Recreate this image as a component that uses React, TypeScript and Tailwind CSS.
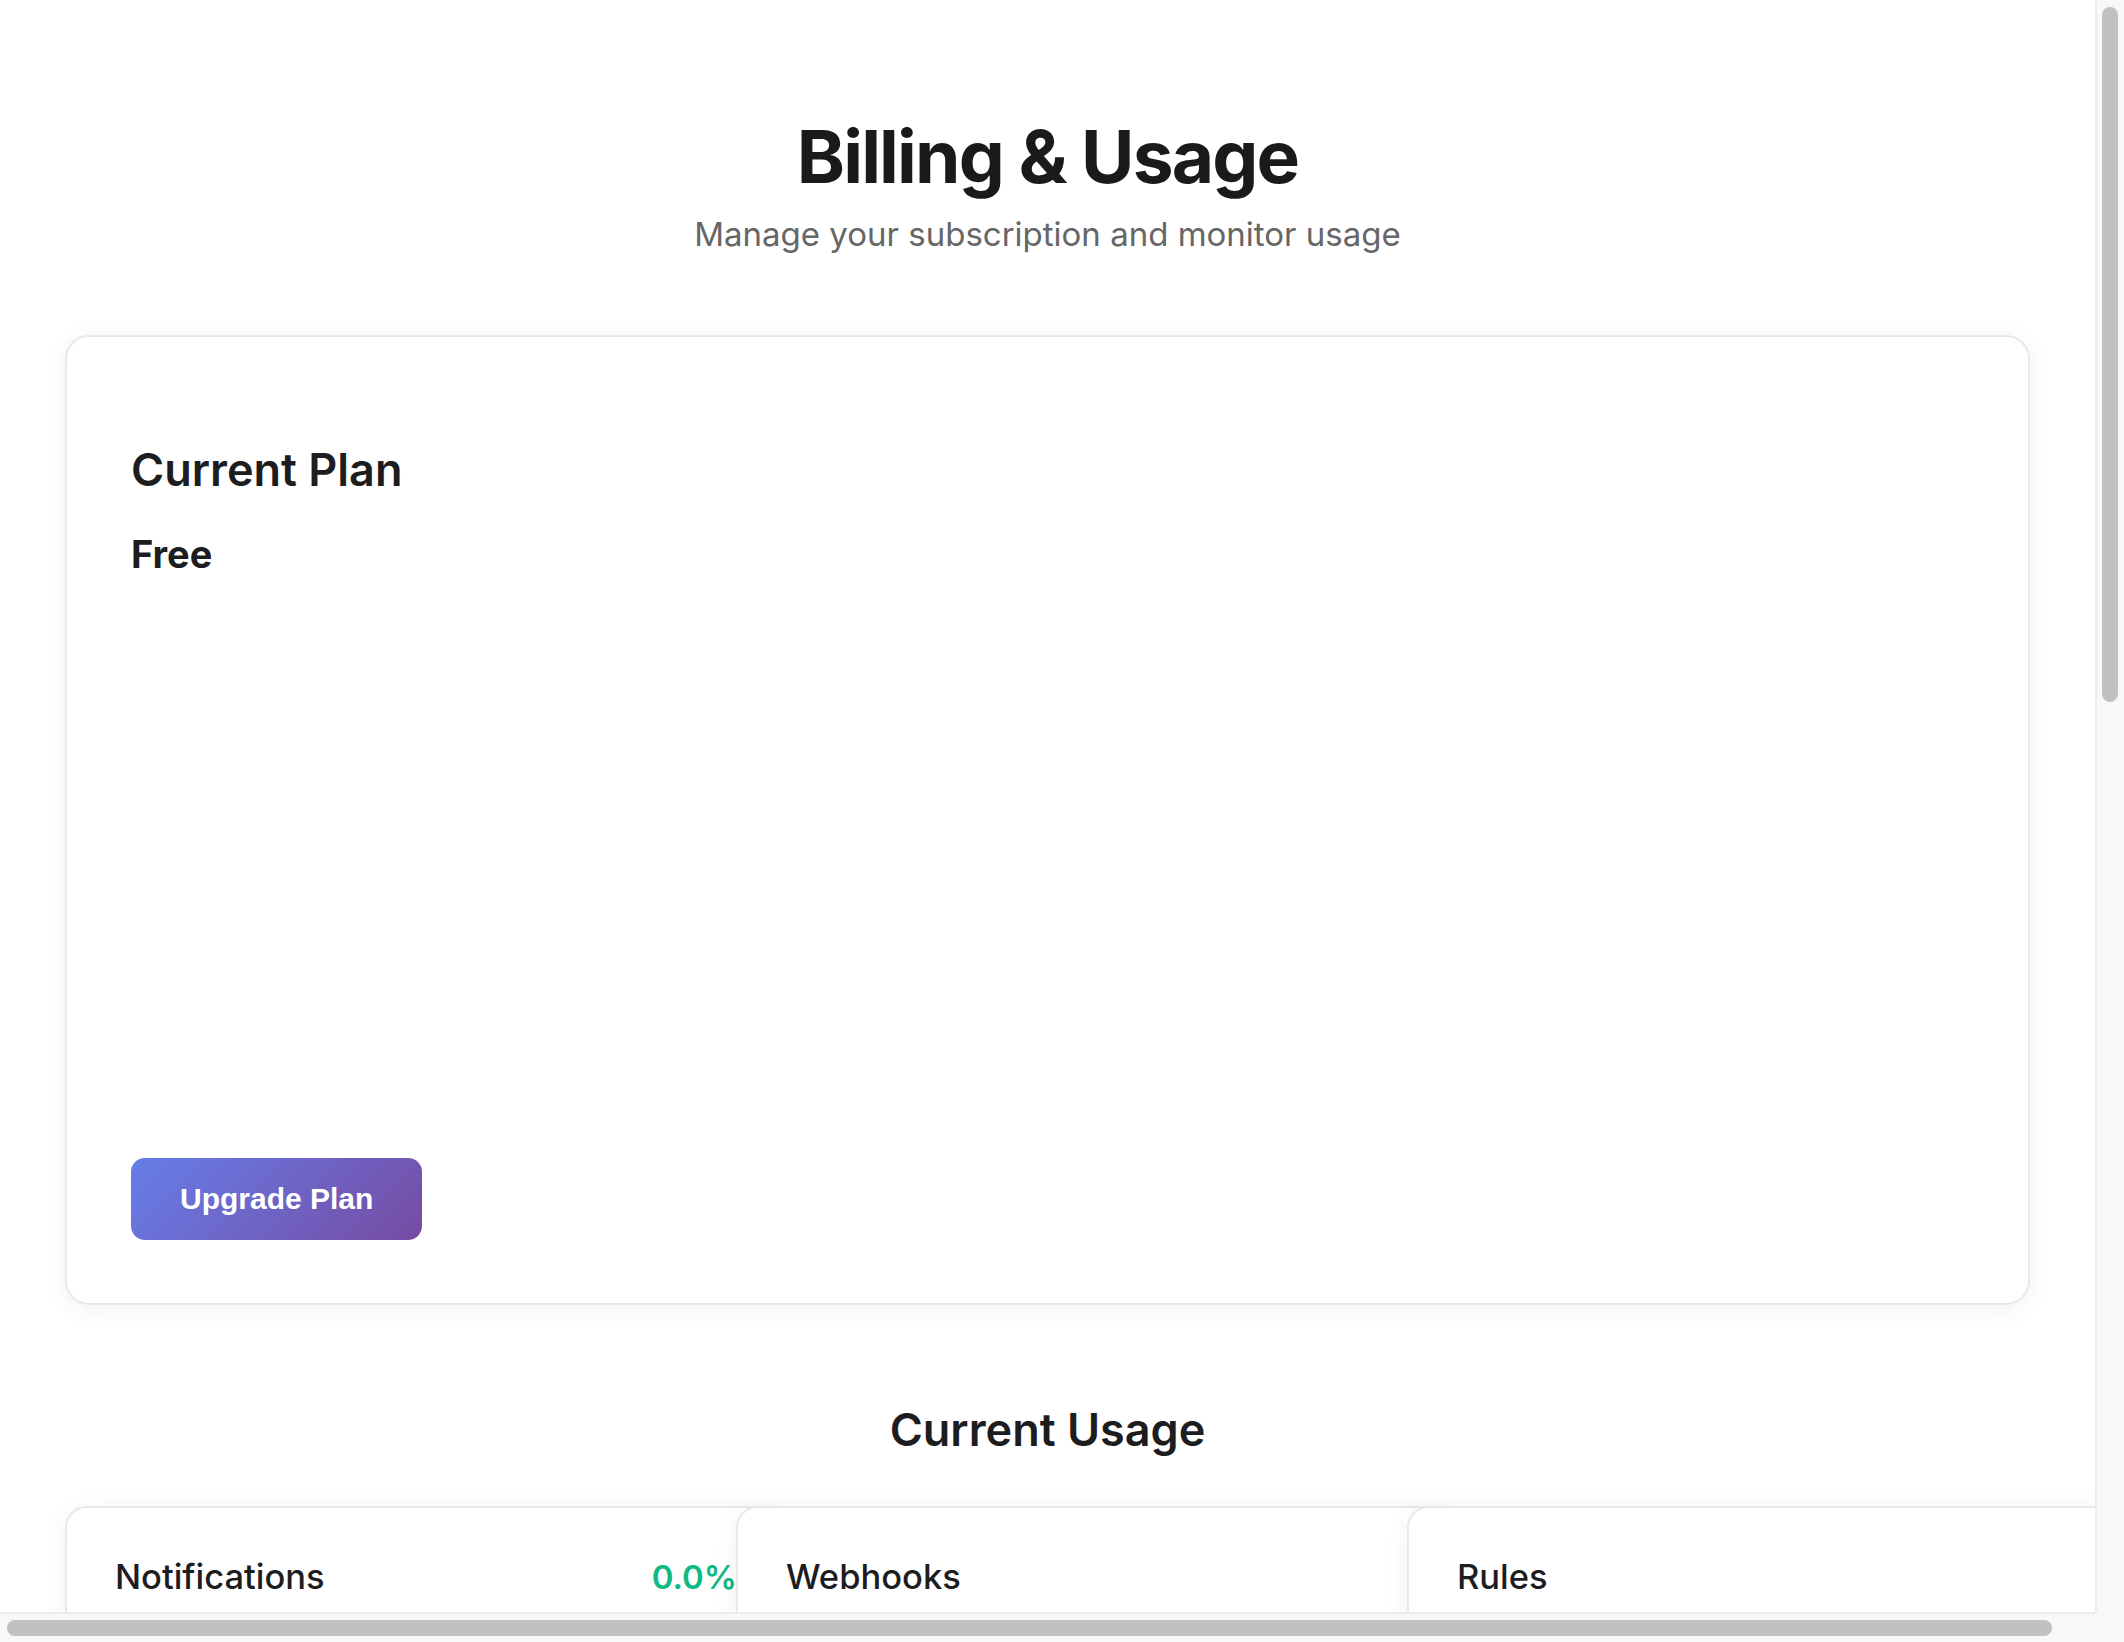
import React from "react";

const usage = [
  { label: "Notifications", pct: "0.0%" },
  { label: "Webhooks", pct: "" },
  { label: "Rules", pct: "" },
];

const UsageCard = ({ label, pct }: { label: string; pct: string }) => (
  <div className="w-[722px] rounded-[22px] border-2 border-[#e8e8ed] bg-white px-[48px] pt-[48px] pb-[48px] shadow-[0_4px_24px_rgba(0,0,0,0.06)]">
    <div className="flex items-baseline justify-between">
      <span className="text-[34.5px] leading-[42px] font-medium text-[#1d1d1f]">{label}</span>
      {pct && <span className="text-[33px] leading-[42px] font-semibold text-[#10b981]">{pct}</span>}
    </div>
    <div className="h-[120px]" />
  </div>
);

const App = () => {
  return (
    <div className="flex h-screen w-screen flex-col overflow-hidden bg-white font-['Inter','Noto_Sans',sans-serif] text-[#1d1d1f]">
      <div className="flex min-h-0 flex-1">
        <main className="min-w-0 flex-1 overflow-hidden px-[65px]">
          {/* header */}
          <header className="pt-[112px] text-center">
            <h1 className="text-[73px] leading-[90px] font-bold tracking-[-0.025em] text-[#1a1a1a]">Billing &amp; Usage</h1>
            <p className="mt-[7px] text-[33px] leading-[51px] text-[#666666]">Manage your subscription and monitor usage</p>
          </header>

          {/* current plan */}
          <section className="mt-[75px] rounded-[24px] border-2 border-[#e8e8ed] bg-white p-[64px] pb-[63px] shadow-[0_4px_24px_rgba(0,0,0,0.06)]">
            <h3 className="mt-[41px] text-[45px] leading-[56px] font-semibold">Current Plan</h3>
            <p className="mt-[34px] text-[38px] leading-[44px] font-bold">Free</p>
            <button className="mt-[582px] rounded-[14px] bg-[linear-gradient(135deg,#667eea_0%,#764ba2_100%)] px-[49px] py-[24px] font-['Liberation_Sans',Arial,sans-serif] text-[30px] leading-[34px] font-bold text-white">
              Upgrade Plan
            </button>
          </section>

          {/* usage */}
          <h2 className="mt-[97px] text-center text-[45px] leading-[56px] font-semibold">Current Usage</h2>
          <div className="mt-[48px] grid grid-cols-[repeat(3,671px)]">
            {usage.map((u) => (
              <UsageCard key={u.label} label={u.label} pct={u.pct} />
            ))}
          </div>
        </main>

        {/* vertical scrollbar */}
        <div className="w-[29px] shrink-0 border-l-2 border-[#ebebeb] bg-[#f8f8f8] pt-[7px] pl-[5px]">
          <div className="h-[695px] w-[16px] rounded-full bg-[#c1c1c1]" />
        </div>
      </div>

      {/* horizontal scrollbar */}
      <div className="flex h-[30px] shrink-0">
        <div className="flex-1 border-t-2 border-[#ebebeb] bg-[#f8f8f8] pt-[6px] pl-[7px]">
          <div className="h-[16px] w-[2045px] rounded-full bg-[#c1c1c1]" />
        </div>
        <div className="w-[29px] bg-[#f8f8f8]" />
      </div>
    </div>
  );
};

export default App;
